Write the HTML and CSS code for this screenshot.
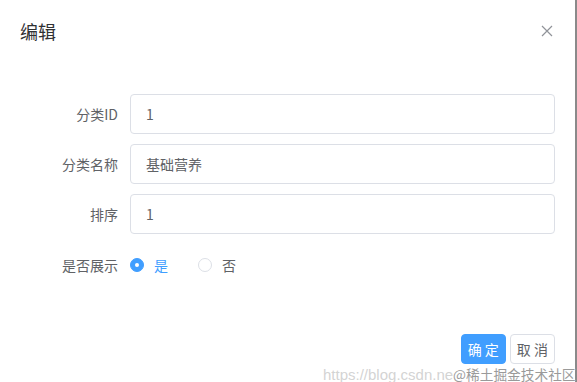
FILE: index.html
```html
<!DOCTYPE html>
<html lang="zh-CN">
<head>
  <meta charset="UTF-8">
  <title>编辑</title>
  <link rel="stylesheet" href="styles.css">
</head>
<body>
  <div class="dialog">
    <div class="dialog-header">
      <span class="dialog-title">编辑</span>
      <button class="dialog-close" type="button" aria-label="关闭">
        <svg width="12" height="12" viewBox="0 0 12 12">
          <path d="M1 1L11 11M11 1L1 11" stroke="#909399" stroke-width="1.2" fill="none"/>
        </svg>
      </button>
    </div>

    <form class="dialog-body">
      <div class="form-item">
        <label class="form-label">分类ID</label>
        <div class="form-content"><input class="form-input" type="text" value="1"></div>
      </div>
      <div class="form-item">
        <label class="form-label">分类名称</label>
        <div class="form-content"><input class="form-input" type="text" value="基础营养"></div>
      </div>
      <div class="form-item">
        <label class="form-label">排序</label>
        <div class="form-content"><input class="form-input" type="text" value="1"></div>
      </div>
      <div class="form-item">
        <label class="form-label">是否展示</label>
        <div class="form-content radios">
          <label class="radio is-checked"><span class="radio-inner"></span><span class="radio-label">是</span></label>
          <label class="radio"><span class="radio-inner"></span><span class="radio-label">否</span></label>
        </div>
      </div>
    </form>

    <div class="dialog-footer">
      <button class="btn btn-primary" type="button">确 定</button>
      <button class="btn" type="button">取 消</button>
    </div>

    <div class="watermark"><span class="wm-url">https://blog.csdn.ne</span><span class="wm-site">@稀土掘金技术社区</span></div>
  </div>
</body>
</html>
```

FILE: styles.css
```css
body {
  margin: 0;
  font-family: "Microsoft YaHei", "Noto Sans CJK SC", "Liberation Sans", sans-serif;
  background-color: #fff;
}

.dialog {
  position: relative;
  width: 575px;
  height: 382px;
  border-right: 2px solid #8a8a8a;
  background-color: #fff;
}

.dialog-header {
  display: flex;
  justify-content: space-between;
  align-items: center;
  padding: 19px 20px 10px 20px;
}

.dialog-title {
  font-size: 18px;
  line-height: 24px;
  color: #303133;
}

.dialog-close {
  border: none;
  background: none;
  padding: 0;
  margin-right: 2px;
  display: flex;
  cursor: pointer;
}

.dialog-body {
  padding: 41px 20px 0 20px;
}

.form-item {
  display: flex;
  align-items: center;
  margin-bottom: 10px;
}

.form-label {
  width: 110px;
  padding-right: 12px;
  box-sizing: border-box;
  text-align: right;
  font-size: 14px;
  color: #606266;
  line-height: 40px;
}

.form-content {
  flex: 1;
}

.form-input {
  width: 100%;
  height: 40px;
  box-sizing: border-box;
  border: 1px solid #dcdfe6;
  border-radius: 4px;
  padding: 0 15px;
  font-family: inherit;
  font-size: 14px;
  color: #606266;
  outline: none;
}

.radios {
  display: flex;
  align-items: center;
  height: 42px;
}

.radio {
  display: flex;
  align-items: center;
  margin-right: 30px;
  font-size: 14px;
  color: #606266;
  cursor: pointer;
}

.radio-inner {
  width: 14px;
  height: 14px;
  box-sizing: border-box;
  border: 1px solid #dcdfe6;
  border-radius: 50%;
  background-color: #fff;
  position: relative;
}

.radio.is-checked .radio-inner {
  border-color: #409eff;
  background-color: #409eff;
}

.radio.is-checked .radio-inner::after {
  content: "";
  position: absolute;
  left: 50%;
  top: 50%;
  width: 4px;
  height: 4px;
  margin: -2px 0 0 -2px;
  border-radius: 50%;
  background-color: #fff;
}

.radio-label {
  padding-left: 10px;
}

.radio.is-checked .radio-label {
  color: #409eff;
}

.dialog-footer {
  position: absolute;
  right: 20px;
  top: 334px;
  display: flex;
  gap: 4px;
}

.btn {
  height: 30px;
  padding: 0 6px;
  border: 1px solid #dcdfe6;
  border-radius: 4px;
  background-color: #fff;
  font-family: inherit;
  font-size: 14px;
  color: #606266;
  cursor: pointer;
}

.btn-primary {
  background-color: #409eff;
  border-color: #409eff;
  color: #fff;
}

.watermark {
  position: absolute;
  left: 323px;
  top: 365px;
  line-height: 17px;
  white-space: nowrap;
}

.wm-url {
  font-size: 15px;
  color: rgba(200, 200, 200, 0.8);
  font-family: "Liberation Sans", sans-serif;
}

.wm-site {
  font-size: 13.7px;
  color: #9a9a9a;
  text-shadow: 0 0 2px #fff, 0 0 1px #fff;
}
```
